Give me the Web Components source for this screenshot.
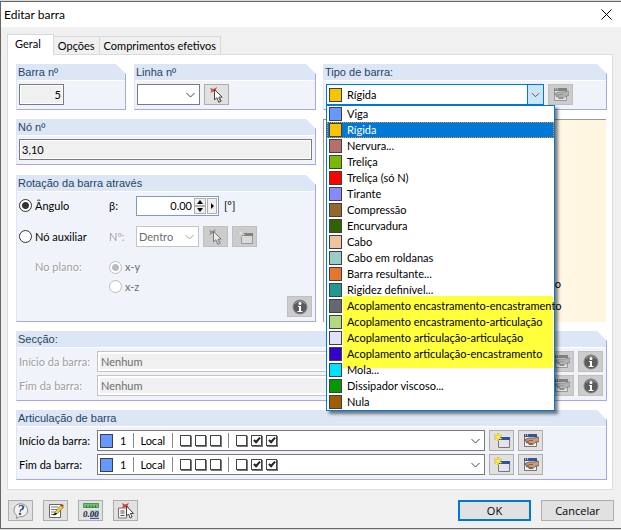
<!DOCTYPE html>
<html lang="pt">
<head>
<meta charset="utf-8">
<title>Editar barra</title>
<style>
    body {
        margin: 0;
        padding-top: 1px;
        background: #dcdcdc;
        font-family: Lato, "Liberation Sans", sans-serif;
        font-size: 11px;
        line-height: 16px;
        color: #000;
    }
    .columns {
        display: grid;
        grid-template-columns: 300fr 284fr;
        gap: 9px 7px;
    }
    .wide {
        grid-column: 1 / -1;
    }
    .pair {
        display: grid;
        grid-template-columns: 110fr 182fr;
        gap: 8px;
    }
    .stack {
        display: flex;
        flex-direction: column;
        gap: 10px;
    }
    .line {
        display: flex;
        gap: 4px;
    }
    .line + .line {
        margin-top: 3px;
    }
    .grow {
        flex: 1;
    }
    .line drop-down.short {
        width: 63px;
    }
    .line type-picker {
        width: 218px;
    }
    .spare {
        padding-right: 60px;
    }
</style>
</head>
<body>

<dialog-window caption="Editar barra">
    <tab-panel tabs="Geral|Opções|Comprimentos efetivos">
        <div class="columns">
            <div class="pair">
                <group-box caption="Barra nº">
                    <text-field label="Barra nº" value="5" align="right" style="width: 45px"></text-field>
                </group-box>
                <group-box caption="Linha nº">
                    <div class="line">
                        <drop-down class="short" name="Linha nº"></drop-down>
                        <icon-button icon="pick" label="Selecionar linha"></icon-button>
                    </div>
                </group-box>
            </div>
            <group-box caption="Tipo de barra:">
                <div class="line">
                    <type-picker></type-picker>
                    <icon-button icon="edit" label="Editar tipo" disabled></icon-button>
                </div>
            </group-box>

            <div class="stack">
                <group-box caption="Nó nº">
                    <text-field label="Nó nº" value="3,10"></text-field>
                </group-box>
                <group-box caption="Rotação da barra através">
                    <rotation-form></rotation-form>
                </group-box>
            </div>
            <preview-pane>o</preview-pane>

            <group-box class="wide" caption="Secção:">
                <div class="line">
                    <drop-down class="grow" label="Início da barra:" value="Nenhum" disabled filled></drop-down>
                    <icon-button icon="edit" label="Editar secção inicial" disabled></icon-button>
                    <icon-button icon="info" label="Informação da secção inicial" disabled></icon-button>
                </div>
                <div class="line">
                    <drop-down class="grow" label="Fim da barra:" value="Nenhum" disabled filled></drop-down>
                    <icon-button icon="edit" label="Editar secção final" disabled></icon-button>
                    <icon-button icon="info" label="Informação da secção final" disabled></icon-button>
                </div>
            </group-box>

            <group-box class="wide" caption="Articulação de barra">
                <div class="line spare">
                    <hinge-select class="grow" label="Início da barra:"></hinge-select>
                    <icon-button icon="new" label="Nova articulação inicial"></icon-button>
                    <icon-button icon="edit" label="Editar articulação inicial"></icon-button>
                </div>
                <div class="line spare">
                    <hinge-select class="grow" label="Fim da barra:"></hinge-select>
                    <icon-button icon="new" label="Nova articulação final"></icon-button>
                    <icon-button icon="edit" label="Editar articulação final"></icon-button>
                </div>
            </group-box>
        </div>
    </tab-panel>

    <icon-button slot="tools" icon="help" label="Ajuda"></icon-button>
    <icon-button slot="tools" icon="note" label="Comentário"></icon-button>
    <icon-button slot="tools" icon="units" label="Unidades"></icon-button>
    <icon-button slot="tools" icon="picklist" label="Selecionar"></icon-button>
    <push-button slot="actions" primary>OK</push-button>
    <push-button slot="actions">Cancelar</push-button>
</dialog-window>

<script>
    const ICONS = {
        pick: `
            <path d="M1 1l3.500 1L8 0 6.800 3 8 5.500 4.500 4.500 1.500 6l.8-2.500z" fill="#d8504c"/>
            <path d="M5.500 2.500v10.300l2.300-2L9.800 15.300l2.400-1.200-2-4h3z" fill="#fff" stroke="#4a4038"/>
            <path d="M9.300 10.500l2 3.500" stroke="#8a7868"/>`,
        picklist: `
            <path d="M.5 5h8v10h-8z" fill="#f4f4f4" stroke="#777"/>
            <path d="M2.500 8h4M2.500 10h4M2.500 12.500h4" stroke="#555"/>
            <path d="M4 0l3 1.500L11 0 9.500 2.500 11 5 7.500 4 4 5l1-2.500z" fill="#d8403c"/>
            <path d="M8.500 3v10l2-2 1.600 4 2-1-1.600-3.500h3z" fill="#fff" stroke="#4a4038"/>`,
        edit: `
            <path d="M1.500 1.500h12v12h-12z" fill="#f2f2f2" stroke="#747474"/>
            <path d="M1 1h13v3H1z" fill="#34558f"/>
            <path d="M2 2h1M4 2h1" stroke="#fff"/>
            <path d="M2 6.500l4-1.500h5l4-1 1 .5v4l-4 1-2 2H6l-.5-1.500L3 9.500l3-1-4-.5z" fill="#c79c80" stroke="#6b4938" stroke-width=".8"/>
            <path d="M6 7.500h4M6 10.500h4" stroke="#7c5746" stroke-width=".8"/>`,
        new: `
            <path d="M4.500 4.500h11v10h-11z" fill="#e4e4ea" stroke="#777"/>
            <path d="M4 4h12v3H4z" fill="#31549b"/>
            <path d="M4 0v8M.5 2l7 4M.5 6l7-4" stroke="#b8a824" stroke-width="2"/>
            <path d="M4 .5v7M1 2.300l6 3.400M1 5.700l6-3.400" stroke="#fff34a" stroke-width="1.300"/>`,
        info: `
            <circle cx="8" cy="8" r="7" fill="#5c5c58" stroke="#84847e"/>
            <path d="M3 5a6 6 0 0 1 10 0" stroke="#989892"/>
            <circle cx="8" cy="4.500" r="1.500" fill="#fff"/>
            <path d="M6 7h3v5h1.500v1h-5v-1H7V8H6z" fill="#fff"/>`,
        help: `
            <path d="M8 .8a7 6.500 0 1 1-1.500 12.900L3.500 15.500l.2-3A7 6.500 0 0 1 8 .8z" fill="#f4f4f4" stroke="#8c8c8c"/>
            <text x="4.500" y="12" font-family="Liberation Serif" font-size="14" font-weight="bold" font-style="italic" fill="#2f4480">?</text>`,
        note: `
            <path d="M1.500 1.500h11v13h-11z" fill="#fff" stroke="#666"/>
            <path d="M3 4h7M3 6.500h6M3 9h4M3 11.500h3" stroke="#777"/>
            <path d="M6.500 11l1-2.500L13 2l2.500 2L9.500 10.500z" fill="#f5cb2d" stroke="#6a5a20" stroke-width=".6"/>
            <path d="M12.500 2.300l1.200-1.500 2.100 1.700-1.300 1.600z" fill="#a33c32"/>
            <path d="M5.500 12l2-2 1 1z" fill="#111" stroke="#111"/>`,
        units: `
            <path d="M.5.5h15v4H.5z" fill="#72bd72" stroke="#4b9a4f"/>
            <path d="M3.500 2.500v2M6.500 2.500v2M9.500 2.500v2M12.500 2.500v2" stroke="#2c6c31"/>
            <path d="M7 7h9v8H7z" fill="#b9c9e8"/>
            <text x="0" y="14" font-family="Liberation Serif" font-size="9" font-weight="bold" font-style="italic" fill="#222">0.00</text>
            <path d="M7 15.500h9" stroke="#31549b"/>`
    };

    const CHEVRON = '<svg class="chevron" width="17" height="19" viewBox="0 0 17 19"><path d="M4.500 8l4 4 4-4" fill="none" stroke="currentColor"/></svg>';

    class DialogWindow extends HTMLElement {
        connectedCallback() {
            const shadow = this.attachShadow({mode: 'open'});
            shadow.innerHTML = `
                <style>
                    :host {
                        display: block;
                        border: 1px solid #666;
                        border-right: 0;
                        background: #f0f0f0;
                    }
                    header {
                        display: flex;
                        justify-content: space-between;
                        align-items: center;
                        height: 25px;
                        padding: 0 9px 0 3px;
                        background: #fff;
                    }
                    h1 {
                        margin: 0;
                        font-size: 12px;
                        font-weight: normal;
                        line-height: 16px;
                    }
                    header button {
                        display: flex;
                        padding: 0;
                        border: 0;
                        background: none;
                    }
                    footer {
                        display: flex;
                        gap: 10px;
                        padding: 10px 7px 7px;
                    }
                    .space {
                        flex: 1;
                    }
                </style>
                <header>
                    <h1>${this.getAttribute('caption')}</h1>
                    <button aria-label="Fechar">
                        <svg width="11" height="11" viewBox="0 0 11 11"><path d="M.5.5l10 10M10.500.5l-10 10" stroke="#000"/></svg>
                    </button>
                </header>
                <slot></slot>
                <footer>
                    <slot name="tools"></slot>
                    <span class="space"></span>
                    <slot name="actions"></slot>
                </footer>`;
        }
    }

    class TabPanel extends HTMLElement {
        connectedCallback() {
            const tabs = this.getAttribute('tabs').split('|');
            const shadow = this.attachShadow({mode: 'open'});
            shadow.innerHTML = `
                <style>
                    :host {
                        display: block;
                        padding: 7px 8px 0 6px;
                    }
                    nav {
                        display: flex;
                        align-items: flex-end;
                    }
                    button {
                        height: 18px;
                        padding: 0 4px;
                        border: 1px solid #d9d9d9;
                        border-width: 1px 1px 0 0;
                        background: #f0f0f0;
                        font: inherit;
                    }
                    button.active {
                        position: relative;
                        height: 21px;
                        margin-bottom: -1px;
                        padding: 0 12px 3px 7px;
                        border-left-width: 1px;
                        background: #fff;
                    }
                    section {
                        padding: 9px 5px 9px 8px;
                        border: 1px solid #dcdcdc;
                        background: #fff;
                    }
                </style>
                <nav role="tablist">
                    ${tabs.map((tab, i) => `<button role="tab" class="${i ? '' : 'active'}">${tab}</button>`).join('')}
                </nav>
                <section><slot></slot></section>`;
        }
    }

    class GroupBox extends HTMLElement {
        connectedCallback() {
            const shadow = this.attachShadow({mode: 'open'});
            shadow.innerHTML = `
                <style>
                    :host {
                        display: block;
                    }
                    h2 {
                        box-sizing: border-box;
                        height: 16px;
                        margin: 0;
                        padding-left: 2px;
                        border-right: 1px solid #a6a6ea;
                        background: #dce6f4;
                        color: #1f4468;
                        font: 11px/16px "Liberation Sans", Arial, sans-serif;
                        clip-path: polygon(0 0, calc(100% - 10px) 0, 100% 10px, 100% 100%, 0 100%);
                    }
                    div {
                        padding: 4px 3px 4px 2px;
                        border: 1px solid #a6a6ea;
                        border-width: 0 1px 1px;
                        border-left-color: #dce6f4;
                        background: linear-gradient(#fff 1px, #f0f4fa 1px);
                    }
                </style>
                <h2>${this.getAttribute('caption')}</h2>
                <div><slot></slot></div>`;
        }
    }

    class TextField extends HTMLElement {
        connectedCallback() {
            const shadow = this.attachShadow({mode: 'open'});
            shadow.innerHTML = `
                <style>
                    :host {
                        display: block;
                    }
                    input {
                        display: block;
                        box-sizing: border-box;
                        width: 100%;
                        height: 21px;
                        padding: 0 2px;
                        border: 1px solid #7a7a7a;
                        outline: 1px solid #fff;
                        outline-offset: -2px;
                        background: #f0f0f0;
                        font: inherit;
                        text-align: ${this.getAttribute('align') || 'left'};
                    }
                </style>
                <input readonly aria-label="${this.getAttribute('label')}" value="${this.getAttribute('value')}">`;
        }
    }

    class IconButton extends HTMLElement {
        connectedCallback() {
            const disabled = this.hasAttribute('disabled');
            const shadow = this.attachShadow({mode: 'open'});
            shadow.innerHTML = `
                <style>
                    :host {
                        display: block;
                        flex: none;
                    }
                    button {
                        display: flex;
                        align-items: center;
                        justify-content: center;
                        width: 25px;
                        height: 21px;
                        padding: 0;
                        border: 1px solid #adadad;
                        background: #e1e1e1;
                    }
                    button:disabled {
                        border-color: #bfbfbf;
                        background: #ccc;
                    }
                    button:disabled svg {
                        filter: grayscale(1);
                        opacity: ${this.getAttribute('icon') === 'info' ? 1 : .6};
                    }
                </style>
                <button aria-label="${this.getAttribute('label')}" ${disabled ? 'disabled' : ''}>
                    <svg width="16" height="16" viewBox="0 0 16 16" fill="none">${ICONS[this.getAttribute('icon')]}</svg>
                </button>`;
        }
    }

    class PushButton extends HTMLElement {
        connectedCallback() {
            const primary = this.hasAttribute('primary');
            const shadow = this.attachShadow({mode: 'open'});
            shadow.innerHTML = `
                <style>
                    :host {
                        display: block;
                    }
                    button {
                        width: 73px;
                        height: 21px;
                        padding: 0;
                        border: ${primary ? '2px solid #0078d7' : '1px solid #adadad'};
                        background: #e1e1e1;
                        font: 11px/16px "Open Sans", "Noto Sans", sans-serif;
                    }
                </style>
                <button><slot></slot></button>`;
        }
    }

    // Closed drop-down; slotted content is drawn in front of the value
    class DropDown extends HTMLElement {
        connectedCallback() {
            const label = this.getAttribute('label');
            const name = this.getAttribute('name') || label;
            const disabled = this.hasAttribute('disabled');
            const shadow = this.attachShadow({mode: 'open'});
            shadow.innerHTML = `
                <style>
                    :host {
                        display: flex;
                        align-items: center;
                    }
                    label {
                        flex: none;
                        width: var(--label-width, 78px);
                        white-space: nowrap;
                    }
                    .box {
                        display: flex;
                        flex: 1;
                        align-items: center;
                        box-sizing: border-box;
                        height: 21px;
                        min-width: 0;
                        border: 1px solid #7a7a7a;
                        background: #fff;
                    }
                    select {
                        flex: 1;
                        min-width: 0;
                        height: 19px;
                        margin-right: -17px;
                        padding: 0 17px 0 2px;
                        border: 0;
                        appearance: none;
                        background: none;
                        color: inherit;
                        font: inherit;
                        opacity: 1;
                    }
                    .chevron {
                        flex: none;
                        color: #444;
                        pointer-events: none;
                    }
                    :host([disabled]) label {
                        color: #a0a0a0;
                        text-shadow: 1px 1px #fff;
                    }
                    :host([disabled]) .box {
                        border-color: #c4c4c4;
                        color: #6d6d6d;
                    }
                    :host([disabled]) .chevron {
                        color: #a0a0a0;
                    }
                    :host([filled]) .box {
                        padding: 2px;
                        background: #f0f0f0;
                        box-shadow: inset 0 0 0 2px #fff;
                    }
                    :host([filled]) select {
                        height: 15px;
                        padding-left: 1px;
                    }
                </style>
                ${label ? `<label for="field">${label}</label>` : ''}
                <span class="box">
                    <slot></slot>
                    <select id="field" aria-label="${name}" ${disabled ? 'disabled' : ''}>
                        <option>${this.getAttribute('value') || ''}</option>
                    </select>
                    ${CHEVRON}
                </span>`;
        }
    }

    class HingeSelect extends HTMLElement {
        connectedCallback() {
            const boxes = (...states) => states
                .map((on, i) => `<input type="checkbox" aria-label="Grau ${i + 1}" ${on ? 'checked' : ''}>`).join('');
            const shadow = this.attachShadow({mode: 'open'});
            shadow.innerHTML = `
                <style>
                    :host {
                        display: block;
                    }
                    .hinge {
                        display: flex;
                        align-items: center;
                        height: 19px;
                        padding-left: 2px;
                    }
                    color-swatch {
                        margin-right: 7px;
                    }
                    .part {
                        display: flex;
                        align-items: center;
                        gap: 3px;
                        height: 15px;
                        padding: 0 7px 0 6px;
                        border-left: 1px solid #888;
                    }
                    .number {
                        padding-left: 0;
                        border-left: 0;
                    }
                    input {
                        appearance: none;
                        display: flex;
                        box-sizing: border-box;
                        justify-content: center;
                        width: 11px;
                        height: 11px;
                        margin: 0 0 0 1px;
                        border: 1px solid #444;
                        background: #fff;
                        box-shadow: 1px 1px #777;
                    }
                    input:checked::after {
                        content: "";
                        width: 2px;
                        height: 5px;
                        border: solid #222;
                        border-width: 0 2px 2px 0;
                        transform: rotate(42deg);
                    }
                </style>
                <drop-down label="${this.getAttribute('label')}">
                    <span class="hinge">
                        <color-swatch color="#6699ff"></color-swatch>
                        <span class="part number">1</span>
                        <span class="part">Local</span>
                        <span class="part">${boxes(0, 0, 0)}</span>
                        <span class="part">${boxes(0, 1, 1)}</span>
                    </span>
                </drop-down>`;
        }
    }

    class ColorSwatch extends HTMLElement {
        connectedCallback() {
            const shadow = this.attachShadow({mode: 'open'});
            shadow.innerHTML = `
                <style>
                    :host {
                        display: block;
                        flex: none;
                        box-sizing: border-box;
                        width: 13px;
                        height: 14px;
                        border: 1px solid #404040;
                        background: ${this.getAttribute('color')};
                    }
                </style>`;
        }
    }

    const TYPES = [
        ['Viga', '#6699ff'],
        ['Rígida', '#f8c400'],
        ['Nervura...', '#b86e6e'],
        ['Treliça', '#7ab800'],
        ['Treliça (só N)', '#ff0000'],
        ['Tirante', '#8888ff'],
        ['Compressão', '#946828'],
        ['Encurvadura', '#336000'],
        ['Cabo', '#eec4a0'],
        ['Cabo em roldanas', '#9acccc'],
        ['Barra resultante...', '#e87430'],
        ['Rigidez definível...', '#209a90'],
        ['Acoplamento encastramento-encastramento', '#646870'],
        ['Acoplamento encastramento-articulação', '#b2d880'],
        ['Acoplamento articulação-articulação', '#e0e0ff'],
        ['Acoplamento articulação-encastramento', '#3400cc'],
        ['Mola...', '#00e0ff'],
        ['Dissipador viscoso...', '#009a00'],
        ['Nula', '#a05c00']
    ];

    class TypePicker extends HTMLElement {
        connectedCallback() {
            const selected = 1;
            const item = ([name, color], i) => `
                <div class="item" role="option" aria-selected="${i === selected}">
                    <color-swatch color="${color}"></color-swatch>
                    <span>${name}</span>
                </div>`;
            const items = TYPES.map(item);
            const shadow = this.attachShadow({mode: 'open'});
            shadow.innerHTML = `
                <style>
                    :host {
                        display: block;
                        position: relative;
                    }
                    .box {
                        display: flex;
                        align-items: center;
                        box-sizing: border-box;
                        height: 21px;
                        padding-left: 2px;
                        border: 1px solid #0078d7;
                        background: #fff;
                    }
                    select {
                        flex: 1;
                        min-width: 0;
                        height: 19px;
                        padding: 0 0 0 5px;
                        border: 0;
                        appearance: none;
                        background: none;
                        font: inherit;
                    }
                    .chevron {
                        flex: none;
                        width: 15px;
                        border-left: 1px solid #0078d7;
                        background: #cce4f7;
                        color: #444;
                    }
                    .list {
                        position: absolute;
                        z-index: 1;
                        top: 21px;
                        left: 0;
                        box-sizing: border-box;
                        width: 229px;
                        border: 1px solid #0078d7;
                        background: #fff;
                        box-shadow: 3px 3px 3px rgba(0, 0, 0, .5);
                    }
                    .item {
                        display: flex;
                        align-items: center;
                        gap: 5px;
                        height: 16px;
                        padding-left: 2px;
                        white-space: nowrap;
                    }
                    .item[aria-selected="true"] {
                        outline: 1px dotted #f09030;
                        outline-offset: -1px;
                        background: #0078d7;
                        color: #fff;
                    }
                    .marked {
                        position: relative;
                    }
                    .marked::before {
                        content: "";
                        position: absolute;
                        z-index: -1;
                        inset: -2px 1px -6px 16px;
                        background: #ffff3c;
                    }
                </style>
                <div class="box">
                    <color-swatch color="${TYPES[selected][1]}"></color-swatch>
                    <select aria-label="Tipo de barra"><option>${TYPES[selected][0]}</option></select>
                    ${CHEVRON}
                </div>
                <div class="list" role="listbox">
                    ${items.slice(0, 12).join('')}
                    <div class="marked" role="group">${items.slice(12, 16).join('')}</div>
                    ${items.slice(16).join('')}
                </div>`;
        }
    }

    class RotationForm extends HTMLElement {
        connectedCallback() {
            const shadow = this.attachShadow({mode: 'open'});
            shadow.innerHTML = `
                <style>
                    :host {
                        display: block;
                        --label-width: 27px;
                    }
                    .row {
                        display: grid;
                        grid-template-columns: 90px 1fr;
                        align-items: center;
                        height: 21px;
                        margin-bottom: 10px;
                    }
                    .choice {
                        display: flex;
                        align-items: center;
                        gap: 3px;
                    }
                    .field {
                        display: flex;
                        align-items: center;
                        gap: 4px;
                    }
                    .field > label {
                        width: 23px;
                    }
                    drop-down {
                        width: 90px;
                    }
                    input[type="radio"] {
                        appearance: none;
                        box-sizing: border-box;
                        width: 13px;
                        height: 13px;
                        margin: 0;
                        border: 1px solid #333;
                        border-radius: 50%;
                        background: #fff;
                    }
                    input[type="radio"]:checked {
                        background: radial-gradient(circle, #333 3px, #fff 4px);
                    }
                    input[type="radio"]:disabled {
                        border-color: #bcbcbc;
                    }
                    input[type="radio"]:checked:disabled {
                        background: radial-gradient(circle, #bcbcbc 3px, #fff 4px);
                    }
                    .number {
                        display: flex;
                        box-sizing: border-box;
                        width: 83px;
                        height: 20px;
                        padding: 1px;
                        border: 1px solid #7f9db9;
                        background: #fff;
                    }
                    .number input {
                        flex: 1;
                        min-width: 0;
                        padding: 0 2px;
                        border: 0;
                        font: inherit;
                        text-align: right;
                    }
                    .number button {
                        display: flex;
                        align-items: center;
                        justify-content: center;
                        width: 10px;
                        padding: 0;
                        border: 1px solid #b0b0b0;
                        background: #f0f0f0;
                    }
                    .spin {
                        display: grid;
                        grid-template-rows: 1fr 1fr;
                        margin-right: 1px;
                    }
                    .spin button {
                        width: 12px;
                        min-height: 0;
                    }
                    .unit {
                        margin-left: 1px;
                    }
                    .plane {
                        grid-template-columns: 90px 1fr;
                        height: 20px;
                        margin: 0;
                        color: #a0a0a0;
                    }
                    .plane > span:first-child {
                        padding-left: 16px;
                        text-shadow: 1px 1px #fff;
                    }
                    .plane label {
                        color: #6d6d6d;
                    }
                    .last {
                        height: 19px;
                    }
                    .foot {
                        display: flex;
                        justify-content: flex-end;
                    }
                </style>
                <div class="row">
                    <span class="choice"><input type="radio" name="mode" id="angle" checked><label for="angle">Ângulo</label></span>
                    <span class="field">
                        <label for="beta">β:</label>
                        <span class="number">
                            <input id="beta" value="0.00">
                            <span class="spin">
                                <button aria-label="Aumentar"><svg width="6" height="4" viewBox="0 0 6 4"><path d="M3 0l3 4H0z"/></svg></button>
                                <button aria-label="Diminuir"><svg width="6" height="4" viewBox="0 0 6 4"><path d="M0 0h6L3 4z"/></svg></button>
                            </span>
                            <button aria-label="Valores"><svg width="3" height="6" viewBox="0 0 3 6"><path d="M0 0l3 3-3 3z"/></svg></button>
                        </span>
                        <span class="unit">[°]</span>
                    </span>
                </div>
                <div class="row">
                    <span class="choice"><input type="radio" name="mode" id="node"><label for="node">Nó auxiliar</label></span>
                    <span class="field">
                        <drop-down label="Nº:" value="Dentro" disabled></drop-down>
                        <icon-button icon="pick" label="Selecionar nó" disabled></icon-button>
                        <icon-button icon="new" label="Novo nó" disabled></icon-button>
                    </span>
                </div>
                <div class="row plane">
                    <span>No plano:</span>
                    <span class="choice"><input type="radio" name="plane" id="xy" checked disabled><label for="xy">x-y</label></span>
                </div>
                <div class="row plane last">
                    <span></span>
                    <span class="choice"><input type="radio" name="plane" id="xz" disabled><label for="xz">x-z</label></span>
                </div>
                <div class="foot"><icon-button icon="info" label="Informação" disabled></icon-button></div>`;
        }
    }

    class PreviewPane extends HTMLElement {
        connectedCallback() {
            const shadow = this.attachShadow({mode: 'open'});
            shadow.innerHTML = `
                <style>
                    :host {
                        display: flex;
                        align-items: flex-end;
                        justify-content: flex-end;
                        padding: 0 45px 30px 0;
                        border: 1px solid #999;
                        border-width: 1px 0 0 1px;
                        margin-right: 1px;
                        background: linear-gradient(to right, #fffdf4, #fff6e0);
                    }
                </style>
                <slot></slot>`;
        }
    }

    customElements.define('color-swatch', ColorSwatch);
    customElements.define('icon-button', IconButton);
    customElements.define('push-button', PushButton);
    customElements.define('text-field', TextField);
    customElements.define('drop-down', DropDown);
    customElements.define('hinge-select', HingeSelect);
    customElements.define('type-picker', TypePicker);
    customElements.define('rotation-form', RotationForm);
    customElements.define('preview-pane', PreviewPane);
    customElements.define('group-box', GroupBox);
    customElements.define('tab-panel', TabPanel);
    customElements.define('dialog-window', DialogWindow);
</script>
</body>
</html>
